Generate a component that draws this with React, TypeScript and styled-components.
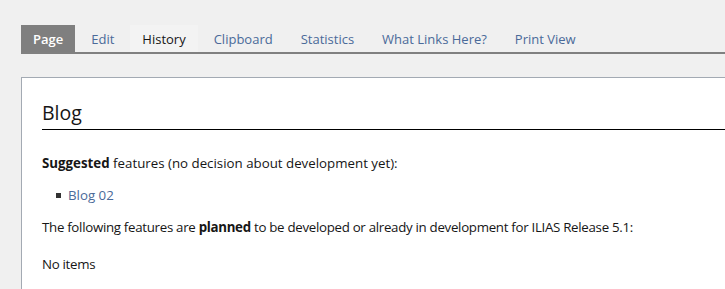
import React from 'react';
import styled, { createGlobalStyle } from 'styled-components';

const GlobalStyle = createGlobalStyle`
  html, body {
    margin: 0;
    padding: 0;
    background: #f0f0f0;
  }
  body {
    font-family: 'Open Sans', 'Liberation Sans', sans-serif;
    font-size: 13.3px;
    color: #161616;
    overflow: hidden;
  }
`;

const tabs = ['Page', 'Edit', 'History', 'Clipboard', 'Statistics', 'What Links Here?', 'Print View'];

const Wrapper = styled.div`
  padding: 25px 0 0 21px;
  width: 725px;
  height: 289px;
  box-sizing: border-box;
  overflow: hidden;
`;

const TabBar = styled.ul`
  display: flex;
  margin: 0;
  padding: 0;
  list-style: none;
  border-bottom: 2px solid #808080;
`;

const Tab = styled.li<{ $active?: boolean; $hover?: boolean }>`
  height: 27px;
  display: flex;
  align-items: center;
  padding: 0 12px;
  margin-right: 4px;
  background: ${(p) => (p.$active ? '#7f7f7f' : p.$hover ? '#f3f3f3' : 'transparent')};
  color: ${(p) => (p.$active ? '#ffffff' : p.$hover ? '#161616' : '#4a6a99')};
  font-weight: ${(p) => (p.$active ? 600 : 400)};
  font-size: 13px;
  white-space: nowrap;
`;

const Panel = styled.div`
  margin-top: 23px;
  background: #ffffff;
  border-left: 1px solid #a3aab3;
  border-top: 1px solid #a3aab3;
  padding: 20px 0 20px 20px;
  height: 300px;
`;

const Heading = styled.h1`
  margin: 0 0 23px;
  font-size: 19.5px;
  font-weight: 400;
  line-height: 30px;
  padding-bottom: 1px;
  border-bottom: 1px solid #000;
  color: #161616;
`;

const Para = styled.p<{ $narrow?: boolean; $gap?: number }>`
  margin: 0 0 ${(p) => p.$gap ?? 12}px;
  line-height: 20px;
  letter-spacing: ${(p) => (p.$narrow ? '-0.3px' : '0')};
`;

const List = styled.ul`
  margin: 0 0 12px;
  padding-left: 14px;
  list-style: none;
  line-height: 20px;
`;

const Item = styled.li`
  display: flex;
  align-items: center;

  &::before {
    content: '';
    width: 5px;
    height: 5px;
    background: #333;
    margin-right: 7px;
  }
`;

const Link = styled.a`
  color: #4a6a99;
  text-decoration: none;
`;

export default function App() {
  return (
    <>
      <GlobalStyle />
      <Wrapper>
        <TabBar>
          {tabs.map((t) => (
            <Tab key={t} $active={t === 'Page'} $hover={t === 'History'}>
              {t}
            </Tab>
          ))}
        </TabBar>
        <Panel>
          <Heading>Blog</Heading>
          <Para>
            <b>Suggested</b> features (no decision about development yet):
          </Para>
          <List>
            <Item>
              <Link href="#">Blog 02</Link>
            </Item>
          </List>
          <Para $narrow $gap={17}>
            The following features are <b>planned</b> to be developed or already in development for ILIAS Release 5.1:
          </Para>
          <Para $narrow>No items</Para>
        </Panel>
      </Wrapper>
    </>
  );
}
